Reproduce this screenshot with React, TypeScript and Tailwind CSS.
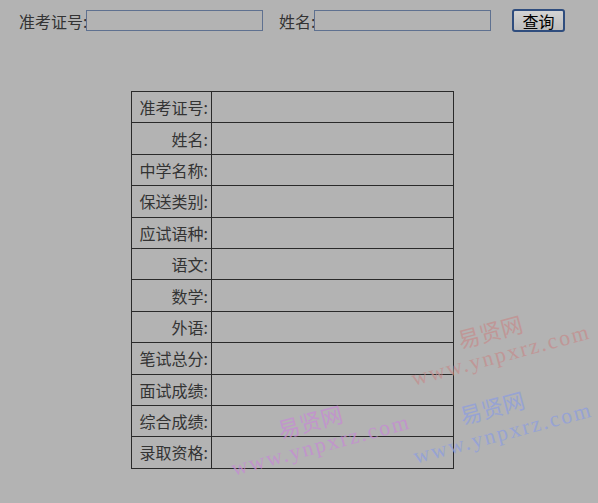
import React from 'react';

const rows = [
  '准考证号:',
  '姓名:',
  '中学名称:',
  '保送类别:',
  '应试语种:',
  '语文:',
  '数学:',
  '外语:',
  '笔试总分:',
  '面试成绩:',
  '综合成绩:',
  '录取资格:',
];

const font = { fontFamily: '"Noto Sans CJK SC", "DejaVu Sans", sans-serif' };

type Mark = { x: number; y: number; wx: number; wy: number; color: string };

const marks: Mark[] = [
  { x: 458, y: 328, wx: 412, wy: 368, color: 'text-[#c48e8e]' },
  { x: 460, y: 404, wx: 414, wy: 446, color: 'text-[#8e9ede]' },
  { x: 278, y: 418, wx: 232, wy: 458, color: 'text-[#c68cd4]' },
];

function Watermark({ m }: { m: Mark }) {
  return (
    <>
      <span
        className={`absolute origin-left -rotate-[15deg] text-[22px] leading-none whitespace-nowrap opacity-75 ${m.color}`}
        style={{ left: m.x, top: m.y, fontFamily: '"Noto Sans CJK SC", serif' }}
      >
        易贤网
      </span>
      <span
        className={`absolute origin-left -rotate-[15deg] text-[22px] tracking-[2px] leading-none whitespace-nowrap opacity-75 ${m.color}`}
        style={{ left: m.wx, top: m.wy, fontFamily: '"Liberation Serif", serif' }}
      >
        www.ynpxrz.com
      </span>
    </>
  );
}

export default function App() {
  return (
    <div className="relative w-[598px] h-[503px] overflow-hidden bg-[#b3b3b3] text-[#333]" style={font}>
      {/* search bar */}
      <div className="flex items-center pl-[19px] pt-[9px] text-[16px] leading-none">
        <span className="w-[67px] whitespace-nowrap">准考证号:</span>
        <input className="h-[21px] w-[177px] border border-[#5f7190] bg-transparent outline-none" />
        <span className="ml-[16px] w-[35px] whitespace-nowrap">姓名:</span>
        <input className="h-[21px] w-[177px] border border-[#5f7190] bg-transparent outline-none" />
        <button className="ml-[21px] h-[23px] w-[53px] rounded-[3px] border-2 border-[#2f4d7e] bg-gradient-to-b from-[#d4d4d4] to-[#bcbcbc] text-[16px] leading-none text-black">
          查询
        </button>
      </div>

      {/* result table */}
      <table className="ml-[131px] mt-[59px] w-[323px] border-collapse border border-[#555] text-[16px]">
        <tbody>
          {rows.map((r) => (
            <tr key={r} className="h-[31.4px]">
              <td className="w-[80px] border border-[#2a2a2a] pr-[3px] text-right leading-none">{r}</td>
              <td className="border border-[#2a2a2a]"></td>
            </tr>
          ))}
        </tbody>
      </table>

      {marks.map((m, i) => (
        <Watermark key={i} m={m} />
      ))}
    </div>
  );
}
